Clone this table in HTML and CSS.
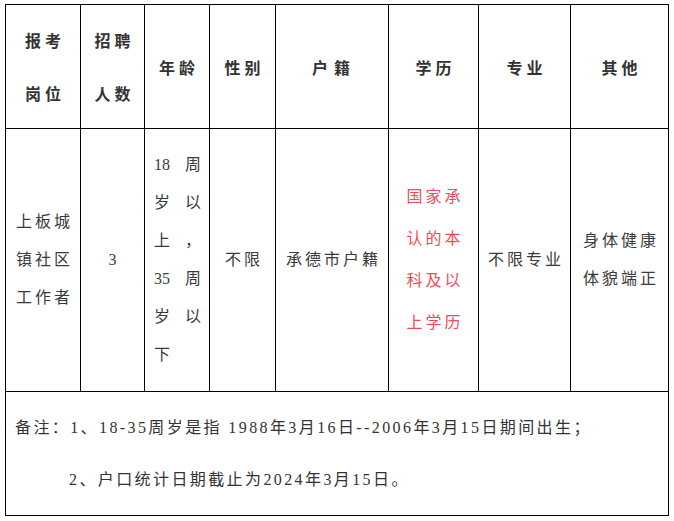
FILE: index.html
```html
<!DOCTYPE html>
<html lang="zh-CN">
<head>
<meta charset="utf-8">
<title>招聘岗位</title>
<link rel="stylesheet" href="styles.css">
</head>
<body>
<table class="grid">
  <colgroup>
    <col class="c1"><col class="c2"><col class="c3"><col class="c4">
    <col class="c5"><col class="c6"><col class="c7"><col class="c8">
  </colgroup>
  <tr class="head">
    <th><div class="two">报考</div><div class="two">岗位</div></th>
    <th><div class="two">招聘</div><div class="two">人数</div></th>
    <th>年龄</th>
    <th>性别</th>
    <th><span class="wide">户籍</span></th>
    <th>学历</th>
    <th>专业</th>
    <th>其他</th>
  </tr>
  <tr class="body">
    <td><div class="ln">上板城</div><div class="ln">镇社区</div><div class="ln">工作者</div></td>
    <td class="num">3</td>
    <td class="age">
      <div class="jl"><span>18</span><span>周</span></div>
      <div class="jl"><span>岁</span><span>以</span></div>
      <div class="jl"><span>上</span><span>，</span></div>
      <div class="jl"><span>35</span><span>周</span></div>
      <div class="jl"><span>岁</span><span>以</span></div>
      <div class="jl"><span>下</span></div>
    </td>
    <td><div class="ln">不限</div></td>
    <td><div class="ln">承德市户籍</div></td>
    <td class="red"><div class="rl">国家承</div><div class="rl">认的本</div><div class="rl">科及以</div><div class="rl">上学历</div></td>
    <td><div class="ln">不限专业</div></td>
    <td><div class="ln">身体健康</div><div class="ln">体貌端正</div></td>
  </tr>
  <tr class="foot">
    <td colspan="8">
      <div class="note">备注：1、18-35周岁是指 1988年3月16日--2006年3月15日期间出生；</div>
      <div class="note indent">2、户口统计日期截止为2024年3月15日。</div>
    </td>
  </tr>
</table>
</body>
</html>
```
FILE: styles.css
```css
html, body {
  margin: 0;
  padding: 0;
  background: #fff;
}
body {
  padding: 4px 0 0 5px;
  font-family: "Liberation Serif", "Noto Sans CJK SC", serif;
  color: #333;
}
.grid {
  border-collapse: collapse;
  table-layout: fixed;
  width: 664px;
}
.grid th, .grid td {
  border: 1.5px solid #000;
  padding: 0;
  text-align: center;
  vertical-align: middle;
}
.c1 { width: 75px; }
.c2 { width: 64px; }
.c3 { width: 65px; }
.c4 { width: 66px; }
.c5 { width: 113px; }
.c6 { width: 90px; }
.c7 { width: 92px; }
.c8 { width: 98px; }

.head { height: 124px; }
.head th {
  font-family: "Noto Sans CJK SC", sans-serif;
  font-size: 16px;
  font-weight: 700;
  color: #333;
  letter-spacing: 4px;
  text-indent: 4px;
  line-height: 24px;
}
.head .two { line-height: 53px; }
.head .wide { letter-spacing: 6px; }

.body { height: 263px; }
.body td {
  font-size: 16px;
  letter-spacing: 3px;
  text-indent: 3px;
  color: #3a3a3a;
  font-weight: 400;
}
.ln { line-height: 38px; }
.num { letter-spacing: 0; text-indent: 0; }
.age { padding: 0 8px 0 9px !important; }
.body td.age { text-indent: 0; letter-spacing: 0; }
.jl {
  display: flex;
  justify-content: space-between;
  line-height: 38px;
}
.body td.red { color: #f34a5c; }
.rl { line-height: 42px; }

.foot { height: 124px; }
.foot td {
  text-align: left;
  padding-left: 9px;
  font-size: 16px;
  color: #333;
}
.note {
  line-height: 52px;
  letter-spacing: 2.4px;
}
.indent { padding-left: 54px; }
```
